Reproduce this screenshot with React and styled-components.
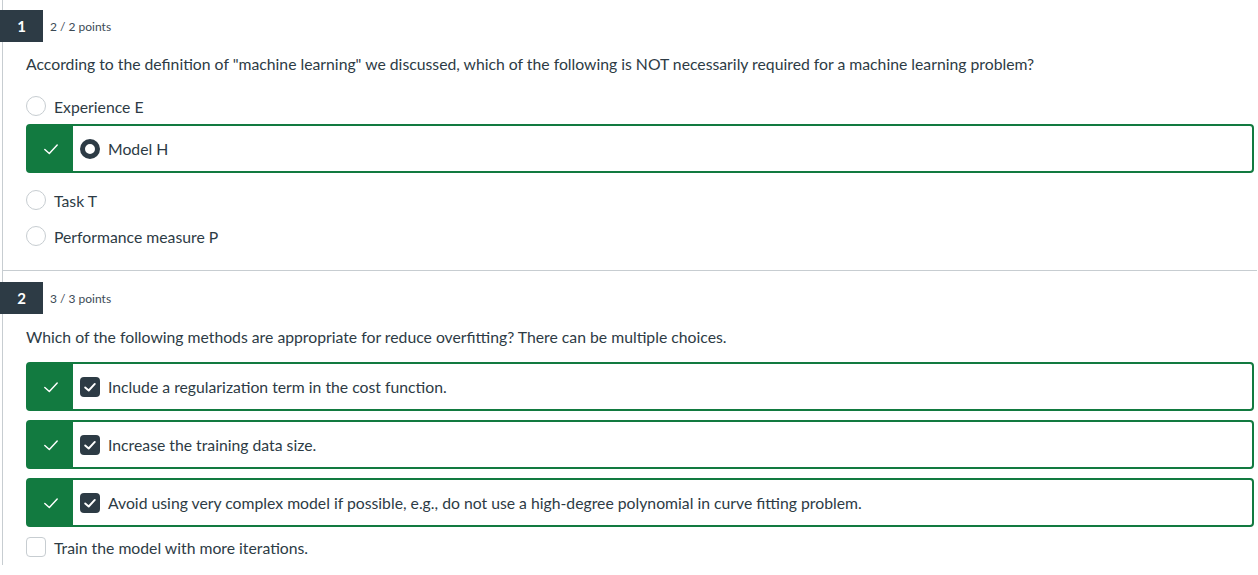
import React from 'react';
import styled, { createGlobalStyle } from 'styled-components';

const GlobalStyle = createGlobalStyle`
    body {
        margin: 0;
        background: #ffffff;
        font-family: Lato, "Open Sans", sans-serif;
        color: #2d3b45;
    }
`;

const Page = styled.div`
    width: 1257px;
`;

const Question = styled.section`
    margin-left: 2px;
    border-left: 1px solid #c7cdd1;
    border-bottom: ${(p) => (p.$last ? 'none' : '1px solid #c7cdd1')};
    padding: ${(p) => p.$top}px 3px ${(p) => (p.$last ? '0' : '16px')} 23px;
`;

const Header = styled.div`
    display: flex;
    align-items: center;
    height: 32px;
    margin-left: -26px;
`;

const Badge = styled.div`
    width: 43px;
    height: 32px;
    background: #2d3b45;
    color: #ffffff;
    font-size: 15px;
    font-weight: 700;
    display: flex;
    align-items: center;
    justify-content: center;
`;

const Points = styled.span`
    margin-left: 7px;
    font-size: 12px;
    color: #3c4a55;
`;

const Prompt = styled.p`
    margin: ${(p) => p.$top || 10}px 0 ${(p) => p.$bottom || 12}px;
    font-size: 15.75px;
    line-height: 24px;
`;

const Row = styled.div`
    display: flex;
    align-items: center;
    gap: 8px;
    height: 36px;
    font-size: 15.75px;
`;

const Correct = styled.div`
    display: flex;
    align-items: center;
    height: 45px;
    border: 2px solid #127a40;
    border-radius: 4px;
    font-size: 15.75px;
    margin-bottom: ${(p) => (p.$mb !== undefined ? p.$mb : 9)}px;
`;

const Flag = styled.div`
    width: 45px;
    align-self: stretch;
    background: #127a40;
    display: flex;
    align-items: center;
    justify-content: center;
`;

const Choice = styled.div`
    display: flex;
    align-items: center;
    gap: 8px;
    margin-left: 7px;
`;

const Radio = styled.span`
    box-sizing: border-box;
    width: 20px;
    height: 20px;
    border-radius: 50%;
    background: #ffffff;
    border: ${(p) => (p.$on ? '5px solid #2d3b45' : '1px solid #c7cdd1')};
    flex-shrink: 0;
`;

const Box = styled.span`
    box-sizing: border-box;
    width: 20px;
    height: 20px;
    border-radius: 4px;
    background: ${(p) => (p.$on ? '#2d3b45' : '#ffffff')};
    border: ${(p) => (p.$on ? 'none' : '1px solid #c7cdd1')};
    display: flex;
    align-items: center;
    justify-content: center;
    flex-shrink: 0;
`;

const Tick = ({ size = 18, width = 1.3 }) => (
    <svg width={size} height={size} viewBox="0 0 16 16" fill="none">
        <polyline points="2.5,8.5 6.5,12 13.5,4.5" stroke="#ffffff" strokeWidth={width} strokeLinecap="round" strokeLinejoin="round" />
    </svg>
);

const Check = ({ on }) => <Box $on={on}>{on && <Tick size={14} width={2.2} />}</Box>;

const App = () => (
    <Page>
        <GlobalStyle />
        <Question $top={10}>
            <Header>
                <Badge>1</Badge>
                <Points>2 / 2 points</Points>
            </Header>
            <Prompt>
                According to the definition of "machine learning" we discussed, which of the following is NOT necessarily required for a machine learning problem?
            </Prompt>
            <Row>
                <Radio />
                Experience E
            </Row>
            <Correct>
                <Flag><Tick /></Flag>
                <Choice>
                    <Radio $on />
                    Model H
                </Choice>
            </Correct>
            <Row>
                <Radio />
                Task T
            </Row>
            <Row>
                <Radio />
                Performance measure P
            </Row>
        </Question>
        <Question $top={11} $last>
            <Header>
                <Badge>2</Badge>
                <Points>3 / 3 points</Points>
            </Header>
            <Prompt $top={11} $bottom={13}>Which of the following methods are appropriate for reduce overfitting? There can be multiple choices.</Prompt>
            <Correct>
                <Flag><Tick /></Flag>
                <Choice>
                    <Check on />
                    Include a regularization term in the cost function.
                </Choice>
            </Correct>
            <Correct>
                <Flag><Tick /></Flag>
                <Choice>
                    <Check on />
                    Increase the training data size.
                </Choice>
            </Correct>
            <Correct $mb={2}>
                <Flag><Tick /></Flag>
                <Choice>
                    <Check on />
                    Avoid using very complex model if possible, e.g., do not use a high-degree polynomial in curve fitting problem.
                </Choice>
            </Correct>
            <Row>
                <Check />
                Train the model with more iterations.
            </Row>
        </Question>
    </Page>
);

export default App;
